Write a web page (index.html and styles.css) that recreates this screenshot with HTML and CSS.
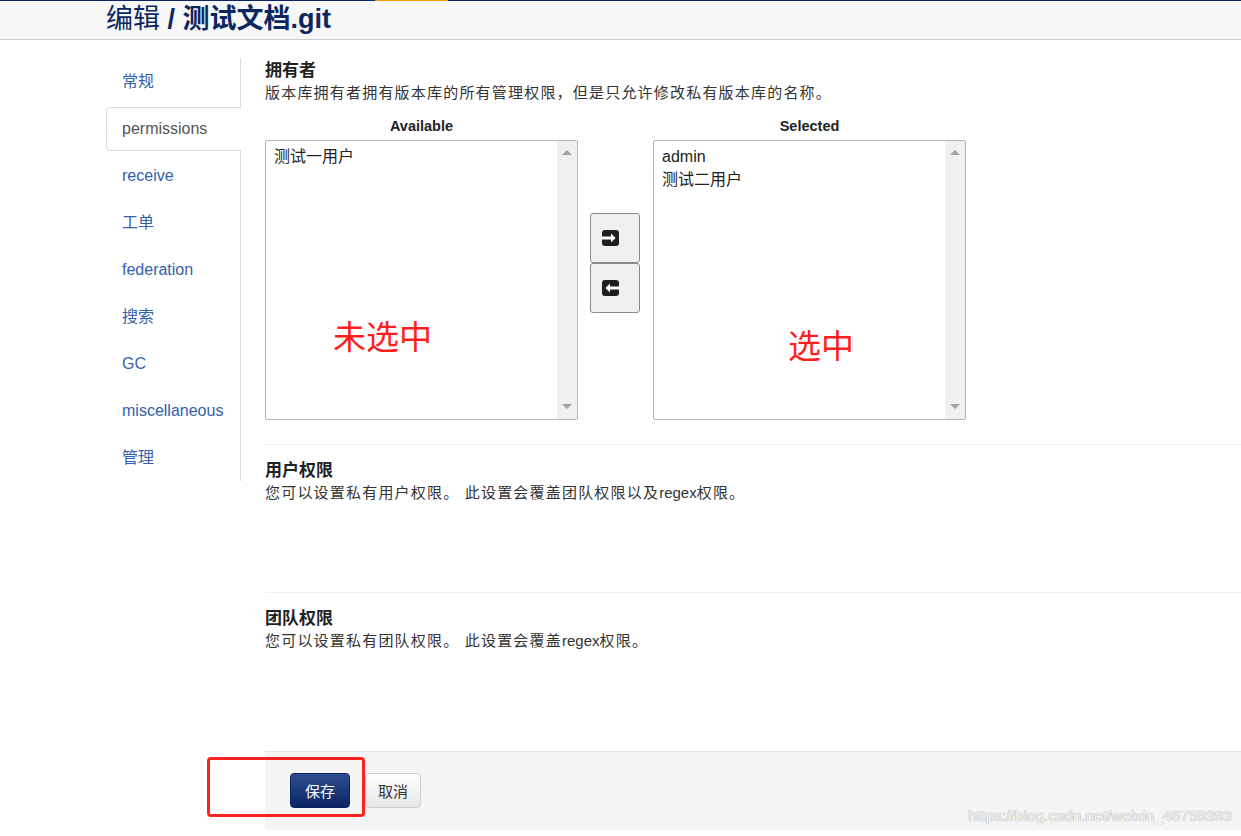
FILE: index.html
```html
<!DOCTYPE html>
<html lang="zh-CN">
<head>
    <meta charset="UTF-8">
    <title>编辑 / 测试文档.git</title>
    <link rel="stylesheet" href="styles.css">
</head>
<body>
    <!-- Top strip -->
    <div class="topline"><span class="topline-mark"></span></div>

    <!-- Page header -->
    <div class="page-header">
        <h1 class="page-title">编辑 <strong>/ 测试文档.git</strong></h1>
    </div>

    <div class="main">
        <!-- Left tabs -->
        <ul class="side-nav">
            <li><a href="#">常规</a></li>
            <li class="active"><a href="#">permissions</a></li>
            <li><a href="#">receive</a></li>
            <li><a href="#">工单</a></li>
            <li><a href="#">federation</a></li>
            <li><a href="#">搜索</a></li>
            <li><a href="#">GC</a></li>
            <li><a href="#">miscellaneous</a></li>
            <li><a href="#">管理</a></li>
        </ul>

        <div class="content">
            <!-- Owners -->
            <div class="section first">
                <h4 class="section-title">拥有者</h4>
                <p class="section-desc">版本库拥有者拥有版本库的所有管理权限，但是只允许修改私有版本库的名称。</p>

                <div class="dual-list">
                    <div class="list-label">Available</div>
                    <div></div>
                    <div class="list-label">Selected</div>

                    <div class="listbox">
                        <div class="listbox-items">
                            <div class="listbox-item">测试一用户</div>
                        </div>
                        <div class="scrollbar">
                            <span class="arrow-up"></span>
                            <span class="arrow-down"></span>
                        </div>
                        <span class="note note-left">未选中</span>
                    </div>

                    <div class="move-buttons">
                        <button class="move-btn" title="add">
                            <svg width="17" height="16" viewBox="0 0 17 16"><rect x="0" y="0" width="17" height="16" rx="3" fill="#1e1e1e"/><path d="M0 6.4h9V3.6l4.6 4.4L9 12.4V9.6H0z" fill="#fff"/></svg>
                        </button>
                        <button class="move-btn" title="remove">
                            <svg width="17" height="16" viewBox="0 0 17 16"><rect x="0" y="0" width="17" height="16" rx="3" fill="#1e1e1e"/><path d="M17 6.4H8V3.6L3.4 8 8 12.4V9.6h9z" fill="#fff"/></svg>
                        </button>
                    </div>

                    <div class="listbox">
                        <div class="listbox-items">
                            <div class="listbox-item">admin</div>
                            <div class="listbox-item">测试二用户</div>
                        </div>
                        <div class="scrollbar">
                            <span class="arrow-up"></span>
                            <span class="arrow-down"></span>
                        </div>
                        <span class="note note-right">选中</span>
                    </div>
                </div>
            </div>

            <!-- User permissions -->
            <div class="section user-perms">
                <h4 class="section-title">用户权限</h4>
                <p class="section-desc">您可以设置私有用户权限。 此设置会覆盖团队权限以及<span class="latin">regex</span>权限。</p>
            </div>

            <!-- Team permissions -->
            <div class="section team-perms">
                <h4 class="section-title">团队权限</h4>
                <p class="section-desc">您可以设置私有团队权限。 此设置会覆盖<span class="latin">regex</span>权限。</p>
            </div>

            <!-- Form actions -->
            <div class="form-actions">
                <span class="note-box"></span>
                <button class="btn btn-primary">保存</button>
                <button class="btn">取消</button>
            </div>
        </div>
    </div>

    <div class="watermark">https://blog.csdn.net/weixin_46759393</div>
</body>
</html>
```

FILE: styles.css
```css
/* Base */
body {
    margin: 0;
    background: #ffffff;
    color: #333333;
    font-family: "Liberation Sans", Arial, "Noto Sans CJK SC", sans-serif;
    font-size: 15px;
    position: relative;
    min-height: 836px;
    overflow: hidden;
}

/* Thin strip on top */
.topline {
    height: 1px;
    background: #0b2463;
    display: flex;
}

.topline-mark {
    margin-left: 375px;
    width: 73px;
    background: #f5a000;
}

/* Header */
.page-header {
    height: 38px;
    background: #f7f7f7;
    border-bottom: 1px solid #cccccc;
    padding-left: 106px;
}

.page-title {
    margin: 0;
    font-size: 27px;
    line-height: 37px;
    font-weight: normal;
    color: #0c2660;
}

.page-title strong {
    font-weight: bold;
}

/* Main layout */
.main {
    display: flex;
    padding: 18px 0 0 106px;
}

/* Side tabs */
.side-nav {
    list-style: none;
    margin: 0;
    padding: 2px 0 0 0;
    width: 134px;
    border-right: 1px solid #dddddd;
    align-self: flex-start;
}

.side-nav li {
    height: 44px;
    margin-bottom: 3px;
}

.side-nav li:last-child {
    margin-bottom: 1px;
}

.side-nav a {
    display: block;
    height: 42px;
    line-height: 42px;
    padding-left: 15px;
    border: 1px solid transparent;
    border-right: 0;
    border-radius: 4px 0 0 4px;
    color: #3560aa;
    text-decoration: none;
    font-size: 16px;
}

.side-nav li.active a {
    background: #ffffff;
    border-color: #dddddd;
    color: #555555;
    margin-right: -1px;
    position: relative;
}

/* Content column */
.content {
    flex: 1;
    margin-left: 24px;
    padding-top: 2px;
}

.section-title {
    margin: 0;
    font-size: 17px;
    line-height: 22px;
    font-weight: bold;
    color: #222222;
}

.section-desc {
    margin: 0;
    line-height: 22px;
    font-size: 15px;
    letter-spacing: 1.2px;
    color: #333333;
}

.section-desc .latin {
    letter-spacing: 0;
}

.user-perms {
    border-top: 1px solid #eeeeee;
    margin-top: 24px;
    padding: 15px 0 88px;
}

.team-perms {
    border-top: 1px solid #eeeeee;
    padding: 15px 0 99px;
}

/* Dual list box */
.dual-list {
    display: grid;
    grid-template-columns: 313px 75px 313px;
    margin-top: 12px;
}

.list-label {
    text-align: center;
    font-weight: bold;
    font-size: 14.5px;
    line-height: 20px;
    color: #222222;
    margin-bottom: 4px;
}

.listbox {
    height: 278px;
    border: 1px solid #b4b4b4;
    border-radius: 2px;
    display: flex;
    position: relative;
    background: #ffffff;
}

.listbox-items {
    flex: 1;
    padding: 4px 8px;
}

.listbox-item {
    font-size: 16px;
    line-height: 23px;
    color: #222222;
}

.scrollbar {
    width: 20px;
    background: #f0f0f0;
    display: flex;
    flex-direction: column;
    justify-content: space-between;
    align-items: center;
    padding: 9px 0 10px;
}

.arrow-up {
    width: 0;
    height: 0;
    border-left: 5px solid transparent;
    border-right: 5px solid transparent;
    border-bottom: 5px solid #a3a3a3;
}

.arrow-down {
    width: 0;
    height: 0;
    border-left: 5px solid transparent;
    border-right: 5px solid transparent;
    border-top: 5px solid #a3a3a3;
}

/* Move buttons */
.move-buttons {
    padding: 73px 0 0 12px;
    display: flex;
    flex-direction: column;
}

.move-btn {
    width: 50px;
    height: 50px;
    padding: 0 10px 0 0;
    background: #efefef;
    border: 1px solid #8a8a8a;
    border-radius: 3px;
    display: flex;
    align-items: center;
    justify-content: center;
    cursor: pointer;
}

.move-btn svg {
    display: block;
}

/* Red annotations */
.note {
    position: absolute;
    color: #ff1e1e;
    font-size: 33px;
    line-height: 36px;
    font-family: "Noto Sans CJK SC", sans-serif;
}

.note-left {
    left: 67px;
    top: 176px;
}

.note-right {
    left: 134px;
    top: 185px;
}

/* Footer actions */
.form-actions {
    position: relative;
    background: #f5f5f5;
    border-top: 1px solid #e5e5e5;
    padding: 21px 0 22px 25px;
    display: flex;
    gap: 15px;
}

.btn {
    height: 35px;
    padding: 0 12px;
    font-family: "Liberation Sans", "Noto Sans CJK SC", sans-serif;
    font-size: 15px;
    color: #333333;
    background: linear-gradient(#ffffff, #e6e6e6);
    border: 1px solid #cccccc;
    border-radius: 4px;
    cursor: pointer;
}

.btn-primary {
    width: 60px;
    color: #ffffff;
    background: linear-gradient(#2f4f92, #0a2463);
    border-color: #0a2463;
}

.note-box {
    position: absolute;
    left: -58px;
    top: 5px;
    width: 152px;
    height: 54px;
    border: 3px solid #ff2222;
    border-radius: 4px;
}

/* Watermark */
.watermark {
    position: absolute;
    right: 9px;
    top: 807px;
    font-size: 15.5px;
    color: #f4f4f4;
    text-shadow: 0 0 1px #a8a8a8, 0 0 1px #a8a8a8;
}
```
